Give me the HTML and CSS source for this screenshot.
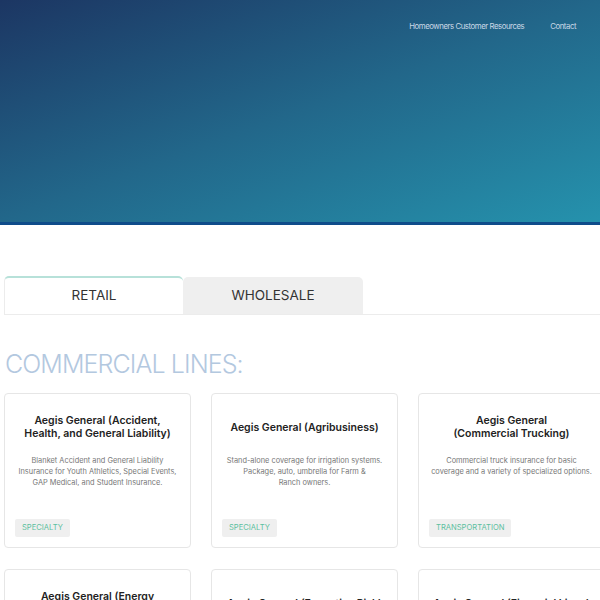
FILE: index.html
```html
<!DOCTYPE html>
<html lang="en">
<head>
    <meta charset="UTF-8">
    <title>Aegis General</title>
    <link rel="stylesheet" href="styles.css">
</head>
<body>
    <div id="hero">
        <ul id="nav">
            <li><a href="">Homeowners Customer Resources</a></li>
            <li><a href="">Contact</a></li>
        </ul>
    </div>
    <div id="main">
        <ul id="tab">
            <li class="selected">RETAIL</li>
            <li>WHOLESALE</li>
        </ul>
        <h2 class="section-title">COMMERCIAL LINES:</h2>
        <div class="cards">
            <div class="card">
                <h3>Aegis General (Accident, Health, and General Liability)</h3>
                <p>Blanket Accident and General Liability Insurance for Youth Athletics, Special Events, GAP Medical, and Student Insurance.</p>
                <span class="tag">SPECIALTY</span>
            </div>
            <div class="card">
                <h3>Aegis General (Agribusiness)</h3>
                <p>Stand-alone coverage for irrigation systems. Package, auto, umbrella for Farm &amp;<br>Ranch owners.</p>
                <span class="tag">SPECIALTY</span>
            </div>
            <div class="card">
                <h3>Aegis General<br>(Commercial Trucking)</h3>
                <p>Commercial truck insurance for basic coverage and a variety of specialized options.</p>
                <span class="tag">TRANSPORTATION</span>
            </div>
            <div class="card">
                <h3>Aegis General (Energy Infrastructure)</h3>
                <p>Coverage for contractors and service providers in the energy industry.</p>
                <span class="tag">SPECIALTY</span>
            </div>
            <div class="card">
                <h3>Aegis General (Executive Risk)</h3>
                <p>Management and professional liability for private and nonprofit companies.</p>
                <span class="tag">PROFESSIONAL</span>
            </div>
            <div class="card">
                <h3>Aegis General (Financial Lines)</h3>
                <p>Coverage for banks, credit unions and other financial institutions.</p>
                <span class="tag">PROFESSIONAL</span>
            </div>
        </div>
    </div>
</body>
</html>
```

FILE: styles.css
```css
*{
    padding: 0;
    margin: 0;
    box-sizing: border-box;
}
ul,ol{
    list-style: none;
}
a{
    text-decoration: none;
    color: inherit;
}
body{
    font-family: "Inter", "Liberation Sans", sans-serif;
    color: #333;
    background: #fff;
    overflow: hidden;
}
#hero{
    height: 225px;
    background: linear-gradient(160deg, #1c3663 0%, #22678a 50%, #2592ad 100%);
    border-bottom: 3px solid #0f4c8a;
    padding: 21px 24px 0 0;
}
#nav{
    display: flex;
    justify-content: flex-end;
    gap: 26px;
    font-size: 7.8px;
    letter-spacing: -0.45px;
    color: #c9d8e6;
}
#main{
    padding: 51px 0 0 4px;
}
#tab{
    display: flex;
    border-bottom: 1px solid #ececec;
}
#tab li{
    width: 180px;
    height: 37px;
    line-height: 37px;
    text-align: center;
    font-size: 13.5px;
    color: #333;
    background: #efefef;
    border-radius: 5px 5px 0 0;
    margin-top: 1px;
}
#tab .selected{
    background: #fff;
    border-top: 2px solid #b7e1d9;
    border-left: 1px solid #ececec;
    margin-top: 0;
    height: 38px;
    line-height: 35px;
    width: 179px;
}
.section-title{
    font-weight: 300;
    font-size: 25px;
    letter-spacing: -0.9px;
    color: #b3c8df;
    margin: 34px 0 14px 1px;
}
.cards{
    display: grid;
    grid-template-columns: repeat(3, 187px);
    column-gap: 20px;
    row-gap: 21px;
    width: 610px;
}
.card{
    height: 155px;
    border: 1px solid #e6e6e6;
    border-radius: 4px;
    padding: 20px 10px 10px;
    display: flex;
    flex-direction: column;
    align-items: center;
    text-align: center;
}
.card h3{
    font-size: 10.5px;
    font-weight: 600;
    line-height: 13px;
    color: #222;
    min-height: 26px;
    display: flex;
    align-items: center;
    justify-content: center;
}
.card p{
    font-size: 7.4px;
    line-height: 11px;
    color: #777;
    margin-top: 15px;
    flex: 1;
}
.tag{
    align-self: flex-start;
    background: #efefef;
    color: #5cbf9f;
    font-size: 7.6px;
    padding: 0 7px;
    height: 18px;
    line-height: 18px;
    border-radius: 2px;
}
```
